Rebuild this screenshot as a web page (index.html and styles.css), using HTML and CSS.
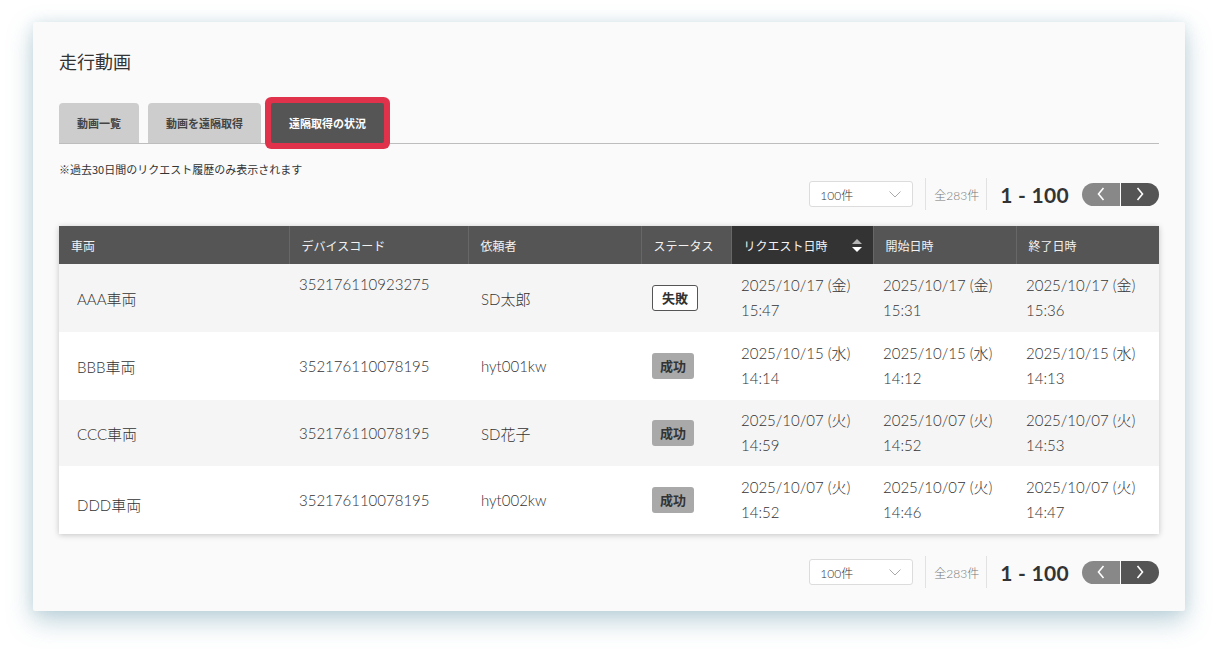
FILE: index.html
```html
<!DOCTYPE html>
<html lang="ja">
<head>
<meta charset="utf-8">
<title>走行動画</title>
<link rel="stylesheet" href="styles.css">
</head>
<body>
<div class="card">
  <h1 class="title">走行動画</h1>
  <div class="tabs">
    <div class="tab">動画一覧</div>
    <div class="tab">動画を遠隔取得</div>
    <div class="tab active">遠隔取得の状況</div>
  </div>
  <p class="note">※過去30日間のリクエスト履歴のみ表示されます</p>
  <div class="pager">
    <div class="select"><span>100件</span><svg width="12" height="7" viewBox="0 0 12 7"><polyline points="0.5,0.5 6,6 11.5,0.5" fill="none" stroke="#aaa" stroke-width="1"/></svg></div>
    <span class="sep"></span>
    <span class="count">全283件</span>
    <span class="sep sep2"></span>
    <span class="range">1 - 100</span>
    <div class="nav">
      <span class="btn prev"><svg width="8" height="14" viewBox="0 0 8 14"><polyline points="6.5,1 1.5,7 6.5,13" fill="none" stroke="#fff" stroke-width="1.6"/></svg></span>
      <span class="btn next"><svg width="8" height="14" viewBox="0 0 8 14"><polyline points="1.5,1 6.5,7 1.5,13" fill="none" stroke="#fff" stroke-width="1.6"/></svg></span>
    </div>
  </div>
  <table class="list">
    <colgroup>
      <col class="c1"><col class="c2"><col class="c3"><col class="c4"><col class="c5"><col class="c6"><col class="c7">
    </colgroup>
    <thead>
      <tr>
        <th>車両</th>
        <th>デバイスコード</th>
        <th>依頼者</th>
        <th>ステータス</th>
        <th class="sorted"><div class="sorthead"><span>リクエスト日時</span><svg width="10" height="13" viewBox="0 0 10 13"><polygon points="0,5 5,0 10,5" fill="#b5b5b5"/><polygon points="0,8 10,8 5,13" fill="#fff"/></svg></div></th>
        <th>開始日時</th>
        <th>終了日時</th>
      </tr>
    </thead>
    <tbody>
      <tr>
        <td class="name">AAA車両</td>
        <td class="code top">352176110923275</td>
        <td class="user">SD太郎</td>
        <td><span class="badge fail">失敗</span></td>
        <td class="date">2025/10/17 (金)<br>15:47</td>
        <td class="date">2025/10/17 (金)<br>15:31</td>
        <td class="date">2025/10/17 (金)<br>15:36</td>
      </tr>
      <tr>
        <td class="name">BBB車両</td>
        <td class="code">352176110078195</td>
        <td class="user">hyt001kw</td>
        <td><span class="badge ok">成功</span></td>
        <td class="date">2025/10/15 (水)<br>14:14</td>
        <td class="date">2025/10/15 (水)<br>14:12</td>
        <td class="date">2025/10/15 (水)<br>14:13</td>
      </tr>
      <tr>
        <td class="name">CCC車両</td>
        <td class="code">352176110078195</td>
        <td class="user">SD花子</td>
        <td><span class="badge ok">成功</span></td>
        <td class="date">2025/10/07 (火)<br>14:59</td>
        <td class="date">2025/10/07 (火)<br>14:52</td>
        <td class="date">2025/10/07 (火)<br>14:53</td>
      </tr>
      <tr>
        <td class="name low">DDD車両</td>
        <td class="code">352176110078195</td>
        <td class="user">hyt002kw</td>
        <td><span class="badge ok">成功</span></td>
        <td class="date">2025/10/07 (火)<br>14:52</td>
        <td class="date">2025/10/07 (火)<br>14:46</td>
        <td class="date">2025/10/07 (火)<br>14:47</td>
      </tr>
    </tbody>
  </table>
  <div class="pager bottom">
    <div class="select"><span>100件</span><svg width="12" height="7" viewBox="0 0 12 7"><polyline points="0.5,0.5 6,6 11.5,0.5" fill="none" stroke="#aaa" stroke-width="1"/></svg></div>
    <span class="sep"></span>
    <span class="count">全283件</span>
    <span class="sep sep2"></span>
    <span class="range">1 - 100</span>
    <div class="nav">
      <span class="btn prev"><svg width="8" height="14" viewBox="0 0 8 14"><polyline points="6.5,1 1.5,7 6.5,13" fill="none" stroke="#fff" stroke-width="1.6"/></svg></span>
      <span class="btn next"><svg width="8" height="14" viewBox="0 0 8 14"><polyline points="1.5,1 6.5,7 1.5,13" fill="none" stroke="#fff" stroke-width="1.6"/></svg></span>
    </div>
  </div>
</div>
</body>
</html>
```
FILE: styles.css
```css
* { box-sizing: border-box; }
html, body { background: #fff; }
body {
  margin: 0;
  padding: 22px 32px 43px 33px;
  font-family: Lato, "Noto Sans CJK JP", sans-serif;
  color: #333;
}
.card {
  width: 1152px;
  background: #fafafa;
  border-radius: 2px;
  padding: 27px 26px 23px 26px;
  box-shadow: 0 10px 26px rgba(100, 150, 170, 0.42), 0 0 12px rgba(140, 180, 195, 0.22);
}
.title {
  margin: 0;
  font-size: 18px;
  line-height: 24px;
  font-weight: normal;
  color: #333;
  font-family: "Noto Sans CJK JP", sans-serif;
}
.tabs {
  margin-top: 30px;
  display: flex;
  gap: 9px;
  border-bottom: 1px solid #bdbdbd;
}
.tab {
  height: 40px;
  line-height: 40px;
  padding: 0 18px;
  background: #cdcdcd;
  border-radius: 4px 4px 0 0;
  font-family: "Noto Sans CJK JP", sans-serif;
  font-size: 11px;
  font-weight: bold;
  color: #444;
}
.tab.active {
  background: #555;
  color: #fff;
  margin-left: 1px;
  border-radius: 2px;
  box-shadow: 0 0 0 6px #e0334b;
  position: relative;
  z-index: 1;
}
.note {
  margin: 17px 0 0 0;
  font-size: 11px;
  line-height: 16px;
  color: #333;
  font-family: "Noto Sans CJK JP", sans-serif;
}
.pager {
  margin-top: 1px;
  display: flex;
  justify-content: flex-end;
  align-items: center;
  height: 32px;
}
.pager.bottom { margin-top: 22px; }
.select {
  width: 104px;
  height: 26px;
  background: #fff;
  border: 1px solid #dcdcdc;
  border-radius: 3px;
  padding: 0 11px 0 10px;
  display: flex;
  align-items: center;
  justify-content: space-between;
  font-size: 12px;
  color: #333;
  font-weight: 300;
}
.sep {
  width: 1px;
  height: 32px;
  background: #e2e2e2;
  margin: 0 8px 0 12px;
}
.sep.sep2 { margin: 0 13px 0 7px; }
.count {
  font-size: 12px;
  color: #777;
  font-weight: 300;
}
.range {
  font-size: 21px;
  font-weight: bold;
  color: #333;
  margin-right: 13px;
  letter-spacing: 0.3px;
}
.nav {
  display: flex;
  gap: 1px;
}
.btn {
  width: 38px;
  height: 23px;
  display: flex;
  align-items: center;
  justify-content: center;
}
.btn.prev { background: #888; border-radius: 12px 0 0 12px; }
.btn.next { background: #555; border-radius: 0 12px 12px 0; }
.list {
  margin-top: 16px;
  width: 1100px;
  border-collapse: collapse;
  table-layout: fixed;
  box-shadow: 0 1px 6px rgba(0, 0, 0, 0.22);
  background: #fff;
}
.c1 { width: 230px; }
.c2 { width: 179px; }
.c3 { width: 173px; }
.c4 { width: 90px; }
.c5 { width: 142px; }
.c6 { width: 143px; }
.c7 { width: 143px; }
.list th {
  height: 38px;
  padding: 0 12px;
  background: #555;
  color: #f2f2f2;
  font-weight: normal;
  font-size: 12px;
  text-align: left;
  border-left: 1px solid #676767;
  font-family: "Noto Sans CJK JP", sans-serif;
}
.list th:first-child { border-left: none; }
.list th.sorted { background: #333; padding-right: 11px; }
.sorthead {
  display: flex;
  align-items: center;
  justify-content: space-between;
}
.list td {
  height: 68px;
  padding: 0 10px 0 11px;
  font-size: 15px;
  font-weight: 300;
  color: #333;
  vertical-align: middle;
}
.list tbody tr:nth-child(odd) td { background: #f5f5f5; }
.list tbody tr:nth-child(even) td { background: #fff; }
.list tbody tr:nth-child(3) td { height: 66px; }
.list td.name { padding-left: 18px; }
.list td.name.low { padding-top: 9px; }
.list td.code { padding-left: 10px; }
.list td.code.top { vertical-align: top; padding-top: 8px; line-height: 25px; }
.list td.user { padding-left: 13px; }
.list td.date { line-height: 25px; padding-left: 10px; }
.badge {
  display: inline-block;
  height: 26px;
  line-height: 26px;
  padding: 0 8px;
  border-radius: 3px;
  font-size: 13px;
  font-weight: bold;
  font-family: "Noto Sans CJK JP", sans-serif;
  color: #333;
}
.badge.fail {
  background: #fff;
  border: 1px solid #555;
  line-height: 24px;
  padding: 0 9px;
}
.badge.ok {
  background: #a9a9a9;
}
```
